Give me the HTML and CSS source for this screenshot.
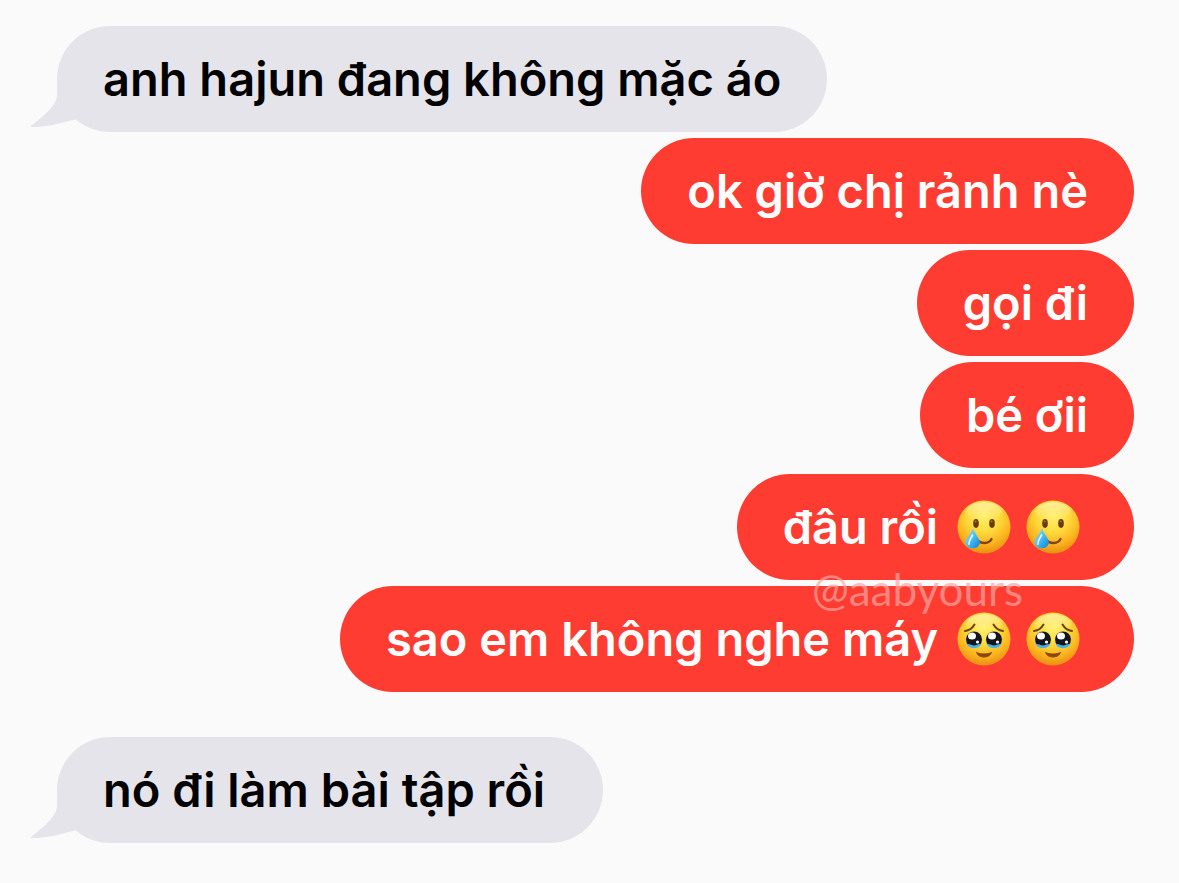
FILE: index.html
```html
<!DOCTYPE html>
<html lang="vi">
<head>
  <meta charset="UTF-8">
  <meta name="viewport" content="width=device-width, initial-scale=1.0">
  <title>Messages</title>
  <link rel="stylesheet" href="styles.css">
</head>
<body>

  <!-- Shared shapes -->
  <svg class="defs" width="0" height="0" aria-hidden="true">
    <defs>
      <radialGradient id="skin" cx="0.5" cy="0.3" r="0.72">
        <stop offset="0" stop-color="#fff06a"/>
        <stop offset="0.4" stop-color="#ffdc3e"/>
        <stop offset="0.72" stop-color="#fcb51f"/>
        <stop offset="1" stop-color="#e88a10"/>
      </radialGradient>
      <linearGradient id="shine" x1="0" y1="0" x2="0" y2="1">
        <stop offset="0" stop-color="#fff" stop-opacity="0.45"/>
        <stop offset="1" stop-color="#fff" stop-opacity="0"/>
      </linearGradient>
      <linearGradient id="drop" x1="0" y1="0" x2="1" y2="1">
        <stop offset="0" stop-color="#a5e6ff"/>
        <stop offset="0.5" stop-color="#45bdf8"/>
        <stop offset="1" stop-color="#0f7fd6"/>
      </linearGradient>
      <symbol id="face" viewBox="0 0 54 54">
        <circle cx="27" cy="27" r="26.5" fill="url(#skin)"/>
        <ellipse cx="27" cy="11" rx="18" ry="9" fill="url(#shine)"/>
      </symbol>
      <symbol id="tear" viewBox="0 0 54 54">
        <use href="#face"/>
        <ellipse cx="19" cy="23.5" rx="2.8" ry="4.4" fill="#6b3a0c"/>
        <ellipse cx="35" cy="23.5" rx="2.8" ry="4.4" fill="#6b3a0c"/>
        <circle cx="18.6" cy="21.5" r="1" fill="#a8763a"/>
        <circle cx="34.6" cy="21.5" r="1" fill="#a8763a"/>
        <path d="M20 39.5c4 5 12 4.5 14.5-.5" fill="none" stroke="#85430b" stroke-width="2.4" stroke-linecap="round"/>
        <path d="M16 28c1.500 6 7 10 7 15a7.500 7 0 0 1-14.500 0C8.500 38 14.500 34 16 28z" fill="url(#drop)"/>
        <path d="M15.500 35c-1 3-4 5.500-3.500 9" fill="none" stroke="#e2f8ff" stroke-width="1.8" stroke-linecap="round"/>
      </symbol>
      <symbol id="pleading" viewBox="0 0 54 54">
        <use href="#face"/>
        <path d="M8 19c4-.5 7.500-3 9.500-6.500M46 19c-4-.5-7.500-3-9.500-6.500" fill="none" stroke="#704009" stroke-width="2" stroke-linecap="round"/>
        <circle cx="17" cy="27.5" r="8" fill="#14161d"/>
        <circle cx="37" cy="27.5" r="8" fill="#14161d"/>
        <path d="M10 32c3-.5 4.500 1.500 7 1.500s4-2 7-1.500c-1 5.500-13 5.500-14 0zM30 32c3-.5 4.500 1.500 7 1.500s4-2 7-1.500c-1 5.500-13 5.500-14 0z" fill="#45b4ec"/>
        <ellipse cx="15" cy="24" rx="4" ry="3.5" fill="#fff"/>
        <ellipse cx="35" cy="24" rx="4" ry="3.5" fill="#fff"/>
        <circle cx="20.5" cy="30" r="1.6" fill="#fff"/>
        <circle cx="40.5" cy="30" r="1.6" fill="#fff"/>
        <path d="M19.500 40.500c4 2 11 2 15 0-2 6-13 6-15 0z" fill="#8a4810" stroke="#8a4810" stroke-linejoin="round"/>
      </symbol>
      <symbol id="tail" viewBox="0 0 48 48">
        <path d="M27 0V16C26 23 20 30 12 37L1 46V47H8L23 45L47 39L48 0Z"/>
      </symbol>
    </defs>
  </svg>

  <main class="thread">
    <div class="group received">
      <p class="bubble">anh hajun đang không mặc áo<svg class="tail" aria-hidden="true"><use href="#tail"/></svg></p>
    </div>

    <div class="group sent">
      <p class="bubble">ok giờ chị rảnh nè</p>
      <p class="bubble">gọi đi</p>
      <p class="bubble">bé ơii</p>
      <p class="bubble">đâu rồi <svg class="emoji" role="img" aria-label="🥲"><use href="#tear"/></svg><svg class="emoji" role="img" aria-label="🥲"><use href="#tear"/></svg></p>
      <p class="bubble">sao em không nghe máy <svg class="emoji" role="img" aria-label="🥹"><use href="#pleading"/></svg><svg class="emoji" role="img" aria-label="🥹"><use href="#pleading"/></svg><span class="watermark">@aabyours</span></p>
    </div>

    <div class="group received last">
      <p class="bubble">nó đi làm bài tập rồi&nbsp;<svg class="tail" aria-hidden="true"><use href="#tail"/></svg></p>
    </div>
  </main>

</body>
</html>
```
FILE: styles.css
```css
body {
  margin: 0;
  background-color: #fafafa;
  font-family: Inter, "Liberation Sans", sans-serif;
}

.defs {
  position: absolute;
}

.thread {
  display: flex;
  flex-direction: column;
  gap: 6px;
  padding: 26px 45px 40px 57px;
}

.group {
  display: flex;
  flex-direction: column;
  gap: 6px;
}

.received {
  align-items: flex-start;
}

.sent {
  align-items: flex-end;
}

.last {
  margin-top: 39px;
}

.bubble {
  position: relative;
  margin: 0;
  padding: 0 46px;
  border-radius: 53px;
  font-size: 47px;
  font-weight: 570;
  line-height: 106px;
}

.received .bubble {
  background-color: #e5e4ea;
  color: #000;
}

.sent .bubble {
  background-color: #ff3c31;
  color: #fff;
}

.tail {
  position: absolute;
  left: -27px;
  bottom: 4px;
  width: 48px;
  height: 48px;
  fill: #e5e4ea;
}

.emoji {
  width: 54px;
  height: 54px;
  margin: 0 8px 0 7px;
  vertical-align: -10px;
}

.watermark {
  position: absolute;
  top: -21px;
  right: 111px;
  color: rgba(255, 165, 160, 0.7);
  font-family: Lato, sans-serif;
  font-size: 44px;
  font-weight: 400;
  line-height: 48px;
}
```
